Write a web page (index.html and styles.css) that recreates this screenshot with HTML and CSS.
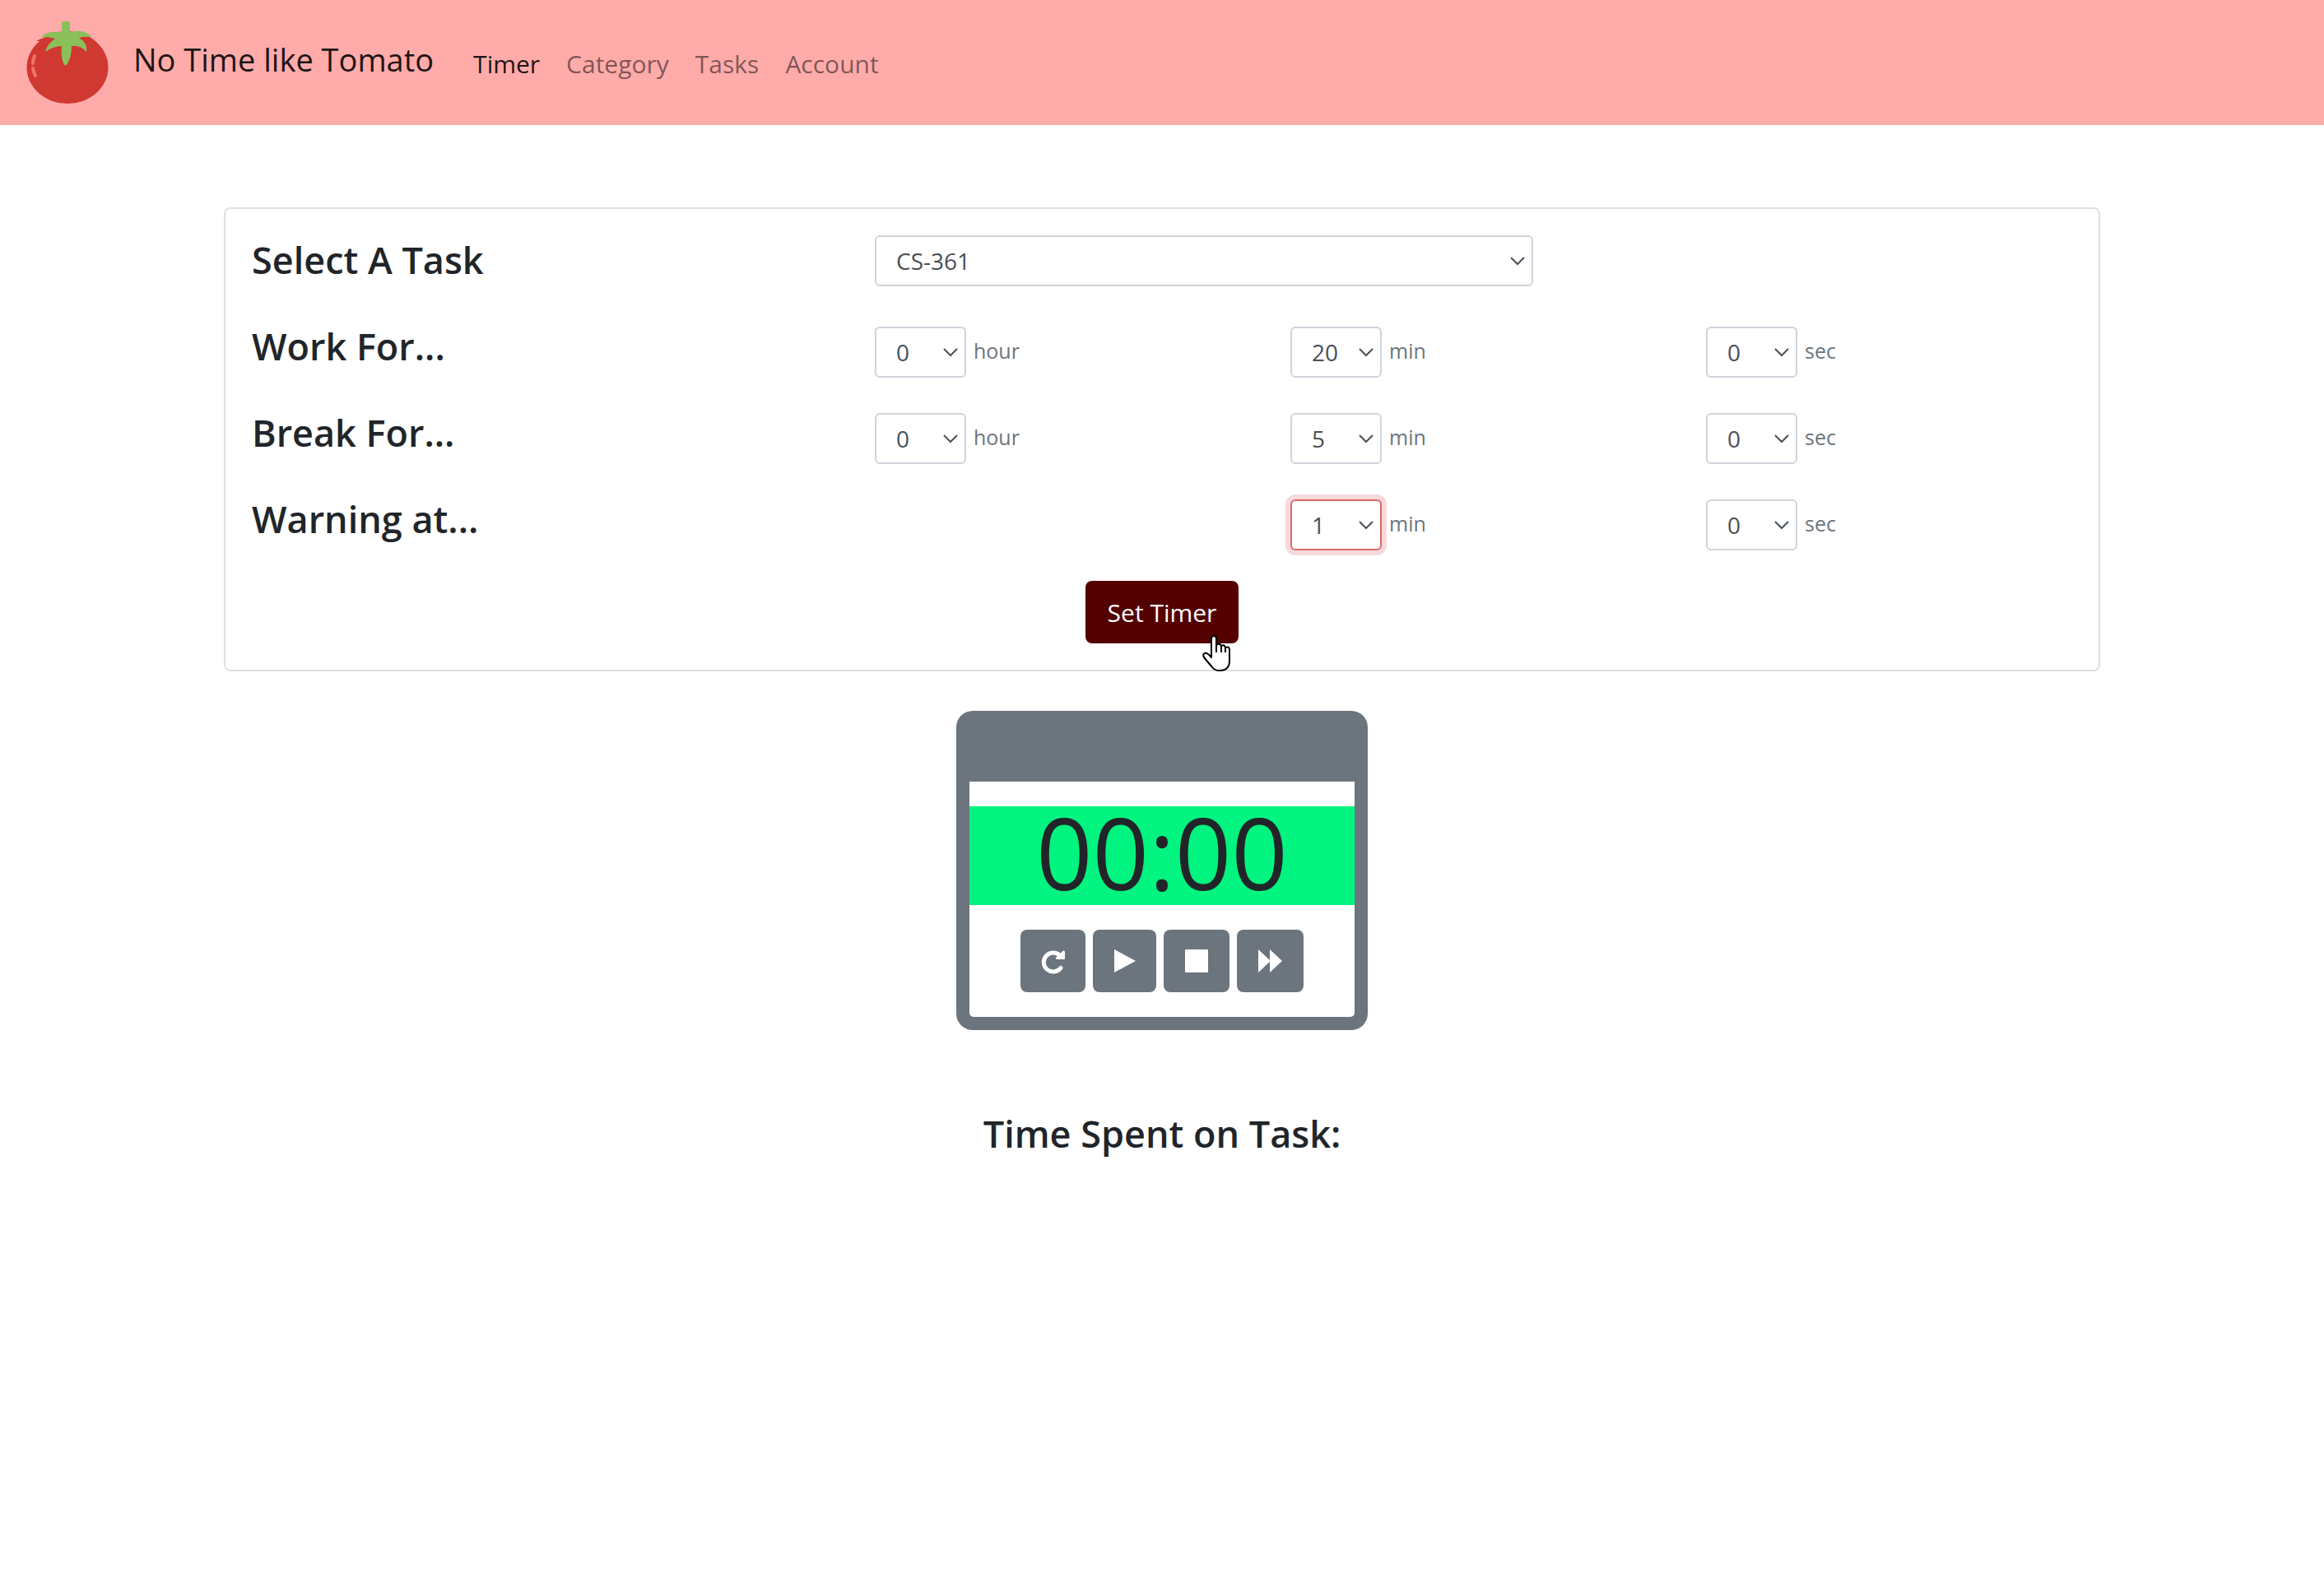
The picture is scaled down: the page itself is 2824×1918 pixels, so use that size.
FILE: index.html
```html
<!DOCTYPE html>
<html lang="en">
<head>
<meta charset="utf-8">
<meta name="viewport" content="width=device-width, initial-scale=1">
<title>No Time like Tomato</title>
<link rel="stylesheet" href="styles.css">
</head>
<body>
<header class="navbar">
  <a class="brand" href="#">
    <svg class="logo" viewBox="0 0 100 102" aria-hidden="true">
      <ellipse cx="50" cy="57" rx="49.500" ry="44" fill="#d03832"/>
      <path d="M12 25Q24 18 34 21L66 20Q75 18 78 21L70 22Q62 23 70 26L60 34L26 32L33 24Q36 21 16 25Z" fill="#d03832"/>
      <path d="M18 20Q26 12 43 14V3Q43 1 45 1H50Q53 1 53 3V14Q70 9 79 20Q68 19 64 21Q75 27 73 38Q65 29 55 31Q55 45 49 54Q46 56 44 49Q42 42 43 31Q33 31 23 38Q25 29 35 22Q30 20 19 20Z" fill="#89c05a"/>
      <path d="M10 43Q8 48 8 52M8 58Q9 63 11 67" fill="none" stroke="#f07464" stroke-width="4" stroke-linecap="round"/>
    </svg>
    <span class="brand-name">No Time like Tomato</span>
  </a>
  <nav class="nav-links">
    <a class="nav-link active" href="#">Timer</a>
    <a class="nav-link" href="#">Category</a>
    <a class="nav-link" href="#">Tasks</a>
    <a class="nav-link" href="#">Account</a>
  </nav>
</header>

<main class="container">
  <form class="card">
    <div class="row">
      <label class="row-title" for="task">Select A Task</label>
      <select class="select select-task" id="task"><option>CS-361</option></select>
    </div>
    <div class="row">
      <h2 class="row-title">Work For...</h2>
      <div class="field"><select class="select" id="work-hour"><option>0</option></select><label for="work-hour">hour</label></div>
      <div class="field"><select class="select" id="work-min"><option>20</option></select><label for="work-min">min</label></div>
      <div class="field"><select class="select" id="work-sec"><option>0</option></select><label for="work-sec">sec</label></div>
    </div>
    <div class="row">
      <h2 class="row-title">Break For...</h2>
      <div class="field"><select class="select" id="break-hour"><option>0</option></select><label for="break-hour">hour</label></div>
      <div class="field"><select class="select" id="break-min"><option>5</option></select><label for="break-min">min</label></div>
      <div class="field"><select class="select" id="break-sec"><option>0</option></select><label for="break-sec">sec</label></div>
    </div>
    <div class="row">
      <h2 class="row-title">Warning at...</h2>
      <div class="field field-min"><select class="select focused" id="warn-min"><option>1</option></select><label for="warn-min">min</label></div>
      <div class="field"><select class="select" id="warn-sec"><option>0</option></select><label for="warn-sec">sec</label></div>
    </div>
    <div class="submit">
      <button class="btn btn-primary" type="button">Set Timer</button>
      <svg class="pointer" viewBox="0 0 34 44" aria-hidden="true">
        <path d="M11 27V4Q11 1 14 1Q17 1 17 4V12Q21 9 23 13Q27 11 28 15Q33 13 33 18V31Q33 43 21 43Q15 43 12 39L2 27Q0 23 3 22Q6 21 11 27Z" fill="#fff" stroke="#000" stroke-width="2" stroke-linejoin="round"/>
        <path d="M17 11V21M23 12V21M28 14V21" fill="none" stroke="#000" stroke-width="2"/>
      </svg>
    </div>
  </form>

  <section class="timer">
    <div class="timer-body">
      <div class="clock">00:00</div>
      <div class="controls">
        <button class="btn btn-icon" type="button" aria-label="Restart"><svg width="27" height="30" viewBox="0 0 27 30"><path d="M22 8.500A11.500 11.500 0 1 0 23 23.500" fill="none" stroke="#fff" stroke-width="5" stroke-linecap="round"/><path d="M26 2.500Q28 2 28 4V12Q28 13 27 13H18Q17 13 17 11Q20 8 26 2.500Z" fill="#fff"/></svg></button>
        <button class="btn btn-icon" type="button" aria-label="Play"><svg width="25" height="30" viewBox="0 0 25 30"><path d="M0 1L26 15L0 29Z" fill="#fff"/></svg></button>
        <button class="btn btn-icon" type="button" aria-label="Stop"><svg width="28" height="30" viewBox="0 0 28 30"><rect y="1" width="28" height="28" rx="1" fill="#fff"/></svg></button>
        <button class="btn btn-icon" type="button" aria-label="Skip"><svg width="29" height="30" viewBox="0 0 29 30"><path d="M0 1L14 14V1L29 15L14 29V16L0 29Z" fill="#fff"/></svg></button>
      </div>
    </div>
  </section>

  <h2 class="spent">Time Spent on Task:</h2>
</main>
</body>
</html>
```
FILE: styles.css
```css
* { box-sizing: border-box; }

body {
  margin: 0;
  background: #fff;
  color: #212529;
  font-family: "Open Sans", "Noto Sans", sans-serif;
  font-size: 30px;
}

button, select { font-family: inherit; }

.navbar {
  display: flex;
  align-items: center;
  gap: 48px;
  min-height: 152px;
  padding: 0 32px;
  background: #ffabaa;
}

.brand {
  display: flex;
  align-items: center;
  gap: 30px;
  color: rgba(0, 0, 0, 0.9);
  text-decoration: none;
}

.logo {
  width: 100px;
  height: 102px;
  overflow: visible;
}

.brand-name {
  font-size: 38px;
  line-height: 60px;
  padding-bottom: 8px;
}

.nav-links {
  display: flex;
  gap: 32px;
  padding-top: 4px;
}

.nav-link {
  color: rgba(0, 0, 0, 0.5);
  line-height: 48px;
  text-decoration: none;
}

.nav-link.active { color: rgba(0, 0, 0, 0.9); }

.container {
  max-width: 2280px;
  margin: 100px auto 0;
}

.card {
  padding: 32px;
  border: 2px solid #dfdfdf;
  border-radius: 8px;
}

.row {
  display: grid;
  grid-template-columns: 757fr 505fr 505fr 445fr;
  align-items: start;
  min-height: 105px;
}

.row-title, .spent {
  margin: 0;
  font-size: 45px;
  font-weight: 600;
  line-height: 60px;
}

.field {
  display: flex;
  align-items: center;
  gap: 9px;
  padding-top: 6px;
  color: #6c757d;
  font-size: 25px;
}

.field label { padding-bottom: 4px; }

.field-min { grid-column: 3; }

.select {
  appearance: none;
  width: 111px;
  height: 62px;
  padding: 0 24px;
  border: 2px solid #ced4da;
  border-radius: 6px;
  background: #fff url("data:image/svg+xml,%3Csvg xmlns='http://www.w3.org/2000/svg' width='20' height='12' viewBox='0 0 20 12'%3E%3Cpath d='M2 2l8 8 8-8' fill='none' stroke='%23495057' stroke-width='2'/%3E%3C/svg%3E") no-repeat right 7px center;
  color: #495057;
  font-size: 28px;
}

.select-task {
  grid-column: 2 / 4;
  width: 800px;
  max-width: 100%;
}

.select.focused {
  border-color: #da6868;
  box-shadow: 0 0 0 6px #f6dadc;
}

.submit {
  position: relative;
  width: fit-content;
  margin: 0 auto;
}

.btn {
  height: 76px;
  padding: 0 26px;
  border: 0;
  border-radius: 8px;
  color: #fff;
  font-size: 30px;
}

.btn-primary {
  padding: 0 27px;
  background: #550000;
}

.pointer {
  position: absolute;
  right: 10px;
  top: 66px;
  width: 34px;
  height: 44px;
}

.timer {
  width: 500px;
  margin: 48px auto 0;
  padding: 86px 16px 16px;
  border-radius: 20px;
  background: #6c757d;
}

.timer-body {
  padding: 30px 0;
  border-radius: 0 0 5px 5px;
  background: #fff;
}

.clock {
  padding-bottom: 8px;
  background: #00f47f;
  font-size: 120px;
  line-height: 112px;
  text-align: center;
}

.controls {
  display: flex;
  justify-content: center;
  gap: 9px;
  margin-top: 30px;
}

.btn-icon {
  display: flex;
  align-items: center;
  background: #6c757d;
}

.btn-icon svg { overflow: visible; }

.spent {
  margin-top: 96px;
  text-align: center;
}
```
